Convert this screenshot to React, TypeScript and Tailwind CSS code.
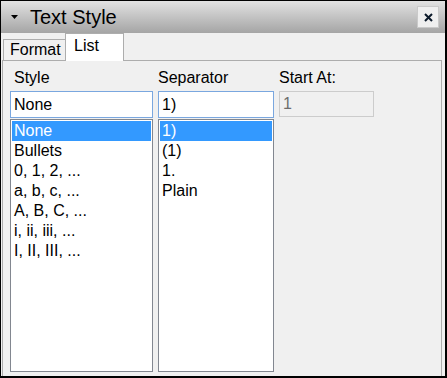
const styles = ['None', 'Bullets', '0, 1, 2, ...', 'a, b, c, ...', 'A, B, C, ...', 'i, ii, iii, ...', 'I, II, III, ...']
const separators = ['1)', '(1)', '1.', 'Plain']

function ListBox({ items, selected, width }: { items: string[]; selected: number; width: string }) {
  return (
    <div className={`mt-px h-[253px] ${width} border border-[#828790] bg-white p-px`}>
      {items.map((item, i) => (
        <div
          key={item}
          className={`flex h-[20px] items-center pl-[2px] leading-[18px] ${i === selected ? 'bg-[#3399ff] text-white' : 'text-black'}`}
        >
          {item}
        </div>
      ))}
    </div>
  )
}

export default function App() {
  return (
    <div
      className="flex h-[378px] w-[447px] flex-col overflow-hidden border-t border-l border-r-2 border-b-2 border-black bg-[#f0f0f0] text-[16px] text-black"
      style={{ fontFamily: '"Liberation Sans", Arial, sans-serif' }}
    >
      {/* title bar */}
      <div className="flex h-[32px] shrink-0 items-center bg-gradient-to-b from-[#e2e2e2] to-[#a5a5a5] pl-[10px] pr-[6px]">
        <svg width="7" height="4" viewBox="0 0 7 4" className="shrink-0">
          <polygon points="0,0 7,0 3.5,4" fill="#000" />
        </svg>
        <span className="ml-[12px] text-[20px] leading-[24px]">Text Style</span>
        <div className="ml-auto flex h-[22px] w-[22px] items-center justify-center border border-[#c9c9c9] bg-[#efefef]">
          <svg width="9" height="9" viewBox="0 0 9 9">
            <path d="M1 1 L8 8 M8 1 L1 8" stroke="#0c1a2a" strokeWidth="2" />
          </svg>
        </div>
      </div>

      {/* tabs */}
      <div className="flex h-[27px] shrink-0 items-end pl-[2px]">
        <div className="flex h-[21px] w-[62px] items-center border-t border-l border-[#adadad] bg-[#f0f0f0] pl-[6px] leading-[18px]">
          Format
        </div>
        <div className="relative z-10 -mb-px h-[28px] w-[59px] border-t border-l border-r border-[#adadad] bg-white pl-[8px] pt-[3px] leading-[18px]">
          List
        </div>
      </div>

      {/* panel */}
      <div className="ml-px flex w-[440px] flex-1 gap-[5px] border-t border-l border-r border-[#adadad] bg-[#f0f0f0] pl-[7px] pt-[8px]">
        <div className="flex flex-col">
          <div className="h-[22px] pl-[4px] leading-[18px]">Style</div>
          <div className="flex h-[27px] w-[143px] items-center border border-[#7aa7df] bg-white pl-[3px]">None</div>
          <ListBox items={styles} selected={0} width="w-[143px]" />
        </div>
        <div className="flex flex-col">
          <div className="h-[22px] leading-[18px]">Separator</div>
          <div className="flex h-[27px] w-[116px] items-center border border-[#7aa7df] bg-white pl-[3px]">1)</div>
          <ListBox items={separators} selected={0} width="w-[116px]" />
        </div>
        <div className="flex flex-col">
          <div className="h-[22px] leading-[18px]">Start At:</div>
          <div className="flex h-[26px] w-[95px] items-center border border-[#cccccc] bg-[#f0f0f0] pl-[3px] text-[#6d6d6d]">1</div>
        </div>
      </div>
    </div>
  )
}
